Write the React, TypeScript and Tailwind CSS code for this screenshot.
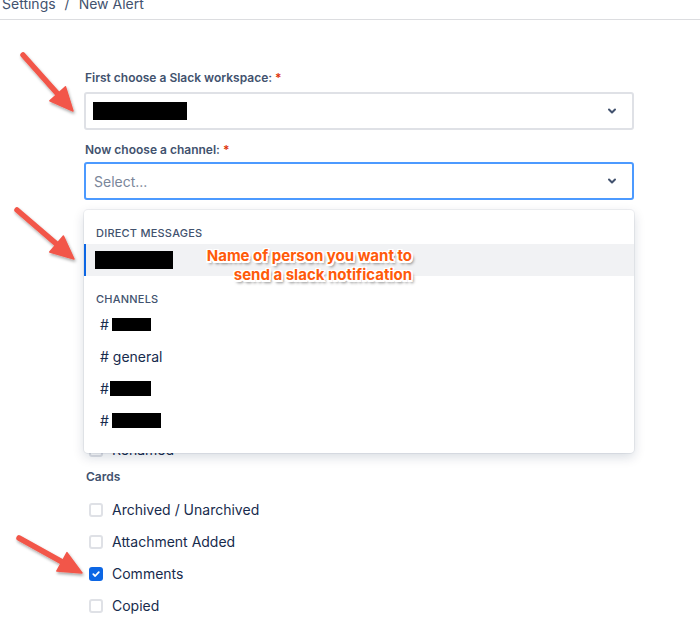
import React from "react";

type Pt = [number, number];

function Arrow({ tail, tip }: { tail: Pt; tip: Pt }) {
  const dx = tip[0] - tail[0];
  const dy = tip[1] - tail[1];
  const len = Math.hypot(dx, dy);
  const ux = dx / len;
  const uy = dy / len;
  const L = 23;
  const W = 10.5;
  const bx = tip[0] - ux * L;
  const by = tip[1] - uy * L;
  const px = -uy;
  const py = ux;
  const w1: Pt = [bx + px * W, by + py * W];
  const w2: Pt = [bx - px * W, by - py * W];
  const lx = bx + ux * 4;
  const ly = by + uy * 4;
  return (
    <g>
      <line x1={tail[0]} y1={tail[1]} x2={lx} y2={ly} stroke="#f2574a" strokeWidth={5.5} strokeLinecap="round" />
      <polygon points={`${tip[0]},${tip[1]} ${w1[0]},${w1[1]} ${w2[0]},${w2[1]}`} fill="#f2574a" stroke="#f2574a" strokeWidth={1.5} strokeLinejoin="round" />
    </g>
  );
}

function Chevron() {
  return (
    <svg width="10" height="8" viewBox="0 0 10 8" className="block">
      <path d="M2 2.5 L5 5.5 L8 2.5" fill="none" stroke="#42526e" strokeWidth="2" strokeLinecap="round" strokeLinejoin="round" />
    </svg>
  );
}

function Redact({ w, h }: { w: number; h: number }) {
  return <span className="inline-block bg-black align-middle" style={{ width: w, height: h }} />;
}

function Check({ label, checked = false }: { label: string; checked?: boolean }) {
  return (
    <div className="h-[32px] flex items-center pl-[5px]">
      {checked ? (
        <span className="w-[14px] h-[14px] rounded-[3px] bg-[#0c66e4] flex items-center justify-center">
          <svg width="10" height="10" viewBox="0 0 10 10">
            <path d="M2.3 5.2 L4.2 7 L7.8 3.2" fill="none" stroke="#fff" strokeWidth="1.8" strokeLinecap="round" strokeLinejoin="round" />
          </svg>
        </span>
      ) : (
        <span className="w-[14px] h-[14px] rounded-[3px] border-2 border-[#dfe1e6] bg-white" />
      )}
      <span className="ml-[9px] text-[14px] leading-[20px] text-[#172b4d]">{label}</span>
    </div>
  );
}

function Heading({ children }: { children: React.ReactNode }) {
  return (
    <div className="h-[28px] pt-[3px] pl-[2px] text-[12px] leading-[16px] font-semibold text-[#42526e]">{children}</div>
  );
}

export default function App() {
  return (
    <div className="relative w-[700px] h-[626px] bg-white overflow-hidden font-['Inter',sans-serif]">
      {/* breadcrumb */}
      <div className="flex h-[20px] border-b border-[#dcdde0]">
        <div className="-mt-[6px] pl-[2px] text-[14px] leading-[20px] text-[#42526e]">
          <span>Settings</span>
          <span className="mx-[9px]">/</span>
          <span>New Alert</span>
        </div>
      </div>

      <div className="ml-[84px] w-[550px] pt-[50px]">
        <label className="block h-[16px] pl-[1px] text-[12px] leading-[16px] font-semibold text-[#42526e]">
          First choose a Slack workspace: <span className="text-[#de350b]">*</span>
        </label>
        <div className="mt-[6px] h-[38px] rounded-[3px] border-2 border-[#dfe1e6] bg-white flex items-center pl-[7px] pr-[15px]">
          <Redact w={94} h={18} />
          <div className="flex-1" />
          <Chevron />
        </div>

        <label className="block mt-[12px] h-[16px] pl-[1px] text-[12px] leading-[16px] font-semibold text-[#42526e]">
          Now choose a channel: <span className="text-[#de350b]">*</span>
        </label>
        <div className="relative mt-[4px]">
          <div className="h-[38px] rounded-[3px] border-2 border-[#4c9aff] bg-white flex items-center pl-[8px] pr-[15px]">
            <span className="text-[14px] text-[#7a869a]">Select...</span>
            <div className="flex-1" />
            <Chevron />
          </div>

          {/* menu overlay */}
          <div className="absolute z-10 left-0 top-[48px] w-[550px] h-[243px] bg-white rounded-[4px] shadow-[0_4px_12px_rgba(9,30,66,0.16),0_0_0_1px_rgba(9,30,66,0.06)] pt-[15px]">
            <div className="h-[16px] pl-[12px] text-[11px] leading-[16px] font-medium tracking-[0.02em] text-[#42526e]">
              DIRECT MESSAGES
            </div>
            <div className="mt-[3px] h-[32px] bg-[#f1f2f4] border-l-2 border-[#0c66e4] flex items-center pl-[9px]">
              <Redact w={78} h={18} />
            </div>
            <div className="mt-[15px] h-[16px] pl-[12px] text-[11px] leading-[16px] font-medium tracking-[0.02em] text-[#42526e]">
              CHANNELS
            </div>
            <div className="mt-[1px] text-[14px] text-[#172b4d]">
              <div className="h-[32px] flex items-center pl-[16px]">
                <span className="mr-[3px]">#</span>
                <Redact w={39} h={13} />
              </div>
              <div className="h-[32px] flex items-center pl-[16px]">
                <span># general</span>
              </div>
              <div className="h-[32px] flex items-center pl-[16px]">
                <span className="mr-[1px]">#</span>
                <Redact w={41} h={15} />
              </div>
              <div className="h-[32px] flex items-center pl-[16px]">
                <span className="mr-[3px]">#</span>
                <Redact w={49} h={15} />
              </div>
            </div>
          </div>
        </div>

        {/* underlying options (partly covered by menu) */}
        <div className="mt-[18px]">
          <Heading>Boards</Heading>
          <Check label="Archived / Unarchived" />
          <Check label="Created" />
          <Check label="Moved" />
          <Heading>Lists</Heading>
          <Check label="Archived / Unarchived" />
          <Check label="Created" />
          <Check label="Renamed" />
          <Heading>Cards</Heading>
          <Check label="Archived / Unarchived" />
          <Check label="Attachment Added" />
          <Check label="Comments" checked />
          <Check label="Copied" />
        </div>
      </div>

      {/* annotation */}
      <div className="absolute z-20 left-[170px] top-[246px] w-[242px] text-right text-[15px] leading-[19px] font-bold text-[#ff5a0a] [text-shadow:1.5px_1.5px_0_#fff,-1.5px_-1.5px_0_#fff,1.5px_-1.5px_0_#fff,-1.5px_1.5px_0_#fff,0_1.5px_0_#fff,1.5px_0_0_#fff,-1.5px_0_0_#fff,0_-1.5px_0_#fff,2px_3px_3px_rgba(0,0,0,0.55)]">
        <div>Name of person you want to</div>
        <div>send a slack notification</div>
      </div>

      {/* arrows */}
      <svg className="absolute inset-0 z-30 pointer-events-none" width="700" height="626" viewBox="0 0 700 626">
        <defs>
          <filter id="sh" x="-20%" y="-20%" width="140%" height="140%">
            <feDropShadow dx="1" dy="2" stdDeviation="1.5" floodColor="#000" floodOpacity="0.35" />
          </filter>
        </defs>
        <g filter="url(#sh)">
          <Arrow tail={[23, 55]} tip={[73, 111]} />
          <Arrow tail={[17, 210]} tip={[74, 259]} />
          <Arrow tail={[19, 538]} tip={[82, 573]} />
        </g>
      </svg>
    </div>
  );
}
